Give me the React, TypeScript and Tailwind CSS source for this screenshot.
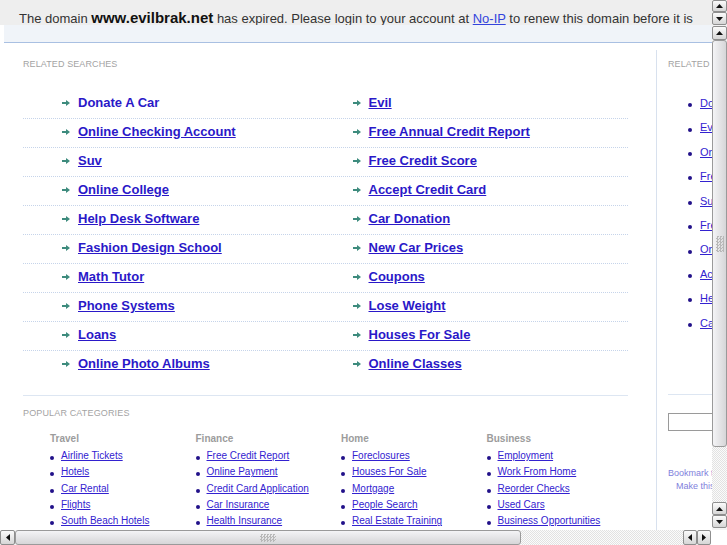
import React from "react";

const related: [string, string][] = [
  ["Donate A Car", "Evil"],
  ["Online Checking Account", "Free Annual Credit Report"],
  ["Suv", "Free Credit Score"],
  ["Online College", "Accept Credit Card"],
  ["Help Desk Software", "Car Donation"],
  ["Fashion Design School", "New Car Prices"],
  ["Math Tutor", "Coupons"],
  ["Phone Systems", "Lose Weight"],
  ["Loans", "Houses For Sale"],
  ["Online Photo Albums", "Online Classes"],
];

const rightList = [
  "Donate A Car",
  "Evil",
  "Online Checking Account",
  "Free Annual Credit Report",
  "Suv",
  "Free Credit Score",
  "Online College",
  "Accept Credit Card",
  "Help Desk Software",
  "Car Donation",
];

const categories: { title: string; items: string[] }[] = [
  { title: "Travel", items: ["Airline Tickets", "Hotels", "Car Rental", "Flights", "South Beach Hotels"] },
  { title: "Finance", items: ["Free Credit Report", "Online Payment", "Credit Card Application", "Car Insurance", "Health Insurance"] },
  { title: "Home", items: ["Foreclosures", "Houses For Sale", "Mortgage", "People Search", "Real Estate Training"] },
  { title: "Business", items: ["Employment", "Work From Home", "Reorder Checks", "Used Cars", "Business Opportunities"] },
];

function Tri({ dir }: { dir: "up" | "down" | "left" | "right" }) {
  if (dir === "up")
    return (
      <svg width="7" height="4" viewBox="0 0 7 4">
        <polygon points="0,4 3.5,0 7,4" fill="#111" />
      </svg>
    );
  if (dir === "down")
    return (
      <svg width="7" height="4" viewBox="0 0 7 4">
        <polygon points="0,0 3.5,4 7,0" fill="#111" />
      </svg>
    );
  if (dir === "left")
    return (
      <svg width="4" height="7" viewBox="0 0 4 7">
        <polygon points="4,0 0,3.5 4,7" fill="#111" />
      </svg>
    );
  return (
    <svg width="4" height="7" viewBox="0 0 4 7">
      <polygon points="0,0 4,3.5 0,7" fill="#111" />
    </svg>
  );
}

function Btn({ dir, className }: { dir: "up" | "down" | "left" | "right"; className: string }) {
  return (
    <div
      className={
        "flex shrink-0 items-center justify-center rounded-[2px] border border-[#8e8e8e] bg-linear-to-b from-[#fbfbfb] to-[#d6d6d6] " +
        className
      }
    >
      <Tri dir={dir} />
    </div>
  );
}

function Arrow() {
  return (
    <svg width="8" height="6" viewBox="0 0 8 6" className="shrink-0">
      <path d="M0 2h4V0l4 3-4 3V4H0z" fill="#3d8b7d" />
    </svg>
  );
}

export default function App() {
  return (
    <div className="flex h-[545px] w-[727px] flex-col overflow-hidden bg-white font-['Liberation_Sans',Arial,sans-serif]">
      {/* top banner frame */}
      <div className="flex h-[25px] shrink-0">
        <div className="flex-1 overflow-hidden whitespace-nowrap bg-[#eeeeee] pl-[19px] pt-[9px] text-[13px] leading-[18px] text-[#333]">
          The domain <span className="text-[15px] font-bold text-[#111]">www.evilbrak.net</span> has expired. Please
          login to your account at <a className="text-[#3344dd] underline">No-IP</a> to renew this domain before it is
        </div>
        <div className="flex w-[15px] flex-col bg-[#f2f2f2]">
          <Btn dir="up" className="h-[12px]" />
          <Btn dir="down" className="h-[13px]" />
        </div>
      </div>

      {/* main frame */}
      <div className="flex h-[505px] shrink-0">
        <div className="flex-1 overflow-hidden bg-white">
          <div className="ml-[4px] h-[18px] border-b border-[#a9c0e2] bg-[#f0f4f9]" />
          <div className="mt-[7px] flex h-[480px]">
            {/* left */}
            <div className="ml-[23px] w-[605px] shrink-0 pt-[9px]">
              <div className="text-[9px] leading-[11px] tracking-[0.1px] text-[#a3a3a3]">RELATED SEARCHES</div>
              <div className="mt-[20px]">
                {related.map((pair, i) => (
                  <div
                    key={i}
                    className={
                      "flex h-[29px] pl-[39px] " +
                      (i < related.length - 1 ? "border-b border-dotted border-[#c6d4ea]" : "")
                    }
                  >
                    {pair.map((t, j) => (
                      <div key={j} className="flex h-[26px] w-[290.5px] shrink-0 items-center">
                        <Arrow />
                        <a
                          className={
                            "ml-[8px] text-[13px] font-bold leading-[26px] text-[#2a18c8] " +
                            (i === 0 && j === 0 ? "no-underline" : "underline")
                          }
                        >
                          {t}
                        </a>
                      </div>
                    ))}
                  </div>
                ))}
              </div>
              <div className="mt-[15px] border-t border-[#dde6f2]" />
              <div className="mt-[12px] text-[9px] leading-[11px] tracking-[0.15px] text-[#a3a3a3]">POPULAR CATEGORIES</div>
              <div className="ml-[27px] mt-[14px] flex">
                {categories.map((c) => (
                  <div key={c.title} className="w-[145.5px] shrink-0">
                    <div className="text-[10px] font-bold leading-[12px] text-[#9c9c9c]">{c.title}</div>
                    <div className="mt-[3px]">
                      {c.items.map((it) => (
                        <div key={it} className="flex h-[16.33px] items-center whitespace-nowrap">
                          <span className="relative top-[2px] h-[4px] w-[4px] shrink-0 rounded-full bg-[#22118a]" />
                          <a className="ml-[7px] text-[10px] leading-[16.33px] text-[#3322d0] underline">{it}</a>
                        </div>
                      ))}
                    </div>
                  </div>
                ))}
              </div>
            </div>
            {/* right */}
            <div className="ml-[28px] w-[220px] shrink-0 border-l border-[#d8e1ee] pl-[11px] pt-[9px]">
              <div className="whitespace-nowrap text-[9px] leading-[11px] tracking-[0.1px] text-[#a3a3a3]">RELATED SEARCHES</div>
              <div className="mt-[21px]">
                {rightList.map((t) => (
                  <div key={t} className="flex h-[24.4px] items-center whitespace-nowrap">
                    <span className="relative top-[2px] ml-[20px] h-[4px] w-[4px] shrink-0 rounded-full bg-[#22118a]" />
                    <a className="ml-[8px] text-[11px] leading-[24.4px] text-[#3322d0] underline">{t}</a>
                  </div>
                ))}
              </div>
              <div className="mt-[59px] border-t border-[#dde6f2]" />
              <div className="mt-[18px] h-[18px] w-[150px] border border-[#9a9a9a] bg-white" />
              <div className="mt-[36px] whitespace-nowrap text-[9px] leading-[13px] text-[#7f7fdc]">Bookmark this page</div>
              <div className="whitespace-nowrap pl-[8px] text-[9px] leading-[13px] text-[#7f7fdc]">Make this your homepage</div>
            </div>
          </div>
        </div>
        {/* vertical scrollbar */}
        <div className="flex w-[15px] flex-col bg-[#f4f4f4] pb-[2px] pt-[1px]">
          <Btn dir="up" className="h-[14px]" />
          <div className="flex h-[407px] shrink-0 items-center justify-center rounded-[3px] border border-[#9a9a9a] bg-linear-to-r from-[#f4f4f6] to-[#d6d6d8]">
            <div className="h-[16px] w-[8px] bg-[image:repeating-conic-gradient(#b8b8b8_0%_25%,transparent_0%_50%)] bg-[length:3px_3px]" />
          </div>
          <div className="flex-1 bg-[image:repeating-conic-gradient(#e2e2e2_0%_25%,#fbfbfb_0%_50%)] bg-[length:2px_2px]" />
          <Btn dir="up" className="h-[13px]" />
          <Btn dir="down" className="h-[13px]" />
        </div>
      </div>

      {/* horizontal scrollbar */}
      <div className="flex h-[15px] shrink-0 bg-[#f4f4f4]">
        <Btn dir="left" className="w-[15px]" />
        <div className="flex w-[506px] shrink-0 items-center justify-center rounded-[3px] border border-[#9a9a9a] bg-linear-to-b from-[#f4f4f6] to-[#d6d6d8]">
          <div className="h-[8px] w-[16px] bg-[image:repeating-conic-gradient(#b8b8b8_0%_25%,transparent_0%_50%)] bg-[length:3px_3px]" />
        </div>
        <div className="flex-1 bg-[image:repeating-conic-gradient(#e2e2e2_0%_25%,#fbfbfb_0%_50%)] bg-[length:2px_2px]" />
        <Btn dir="left" className="w-[14px]" />
        <Btn dir="right" className="w-[14px]" />
        <div className="w-[16px] shrink-0 bg-white" />
      </div>
    </div>
  );
}
